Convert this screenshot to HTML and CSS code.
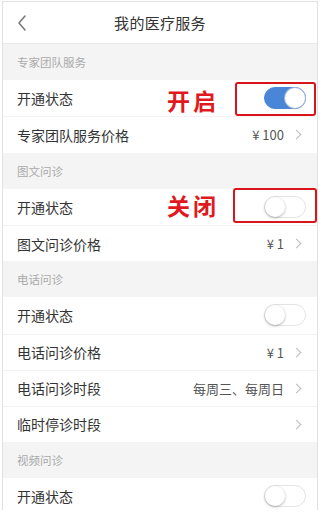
FILE: index.html
```html
<!DOCTYPE html>
<html lang="zh-CN">
<head>
<meta charset="utf-8">
<link rel="stylesheet" href="styles.css">
</head>
<body>
<div class="frame">
  <div class="navbar">
    <svg class="back" width="12" height="18" viewBox="0 0 12 18"><path d="M9 2 L3 9 L9 16" fill="none" stroke="#777" stroke-width="1.5" stroke-linecap="round" stroke-linejoin="round"/></svg>
    <div class="title">我的医疗服务</div>
  </div>

  <div class="section">专家团队服务</div>
  <div class="row">
    <span class="label">开通状态</span>
    <span class="switch on"><span class="knob"></span></span>
    <span class="note note1">开启</span>
    <span class="mark mark1"></span>
  </div>
  <div class="row">
    <span class="label">专家团队服务价格</span>
    <span class="value">¥ 100</span>
    <span class="chev"></span>
  </div>

  <div class="section">图文问诊</div>
  <div class="row">
    <span class="label">开通状态</span>
    <span class="switch"><span class="knob"></span></span>
    <span class="note note2">关闭</span>
    <span class="mark mark2"></span>
  </div>
  <div class="row">
    <span class="label">图文问诊价格</span>
    <span class="value">¥ 1</span>
    <span class="chev"></span>
  </div>

  <div class="section">电话问诊</div>
  <div class="row">
    <span class="label">开通状态</span>
    <span class="switch"><span class="knob"></span></span>
  </div>
  <div class="row">
    <span class="label">电话问诊价格</span>
    <span class="value">¥ 1</span>
    <span class="chev"></span>
  </div>
  <div class="row">
    <span class="label">电话问诊时段</span>
    <span class="value">每周三、每周日</span>
    <span class="chev"></span>
  </div>
  <div class="row">
    <span class="label">临时停诊时段</span>
    <span class="value"></span>
    <span class="chev"></span>
  </div>

  <div class="section">视频问诊</div>
  <div class="row">
    <span class="label">开通状态</span>
    <span class="switch"><span class="knob"></span></span>
  </div>
</div>
</body>
</html>
```

FILE: styles.css
```css
* { box-sizing: border-box; }
html, body { margin: 0; padding: 0; background: #fff; }
body {
  font-family: "Noto Sans CJK SC", "Noto Sans", sans-serif;
  color: #333;
}
.frame {
  margin: 1px 2px 0 2px;
  width: 316px;
  height: 509px;
  border: 1px solid #e2e2e2;
  border-bottom: none;
  overflow: hidden;
  background: #f4f4f4;
}
.navbar {
  height: 42px;
  background: #fff;
  border-bottom: 1px solid #e8e8e8;
  display: flex;
  align-items: center;
  justify-content: center;
  position: relative;
}
.back { position: absolute; left: 13px; top: 12px; }
.title { font-size: 15px; color: #333; letter-spacing: 0.3px; }
.section {
  height: 36.2px;
  display: flex;
  align-items: center;
  padding-left: 14px;
  font-size: 11.5px;
  color: #aaa;
  background: #f4f4f4;
}
.row {
  height: 36.2px;
  display: flex;
  align-items: center;
  padding: 0 14px 0 14px;
  background: #fff;
  position: relative;
  border-top: 1px solid #f3f3f3;
}
.section + .row { border-top: none; }
.label { font-size: 14px; color: #333; flex: 1; }
.value { font-size: 13px; color: #555; margin-right: 9px; white-space: pre; }
.chev {
  width: 7px; height: 7px;
  border-top: 1.2px solid #bbb;
  border-right: 1.2px solid #bbb;
  transform: rotate(45deg);
  margin-right: 3px;
}
.switch {
  width: 42px; height: 22px;
  border-radius: 11px;
  border: 1px solid #e4e4e4;
  background: #fff;
  position: relative;
  margin-right: -3px;
}
.switch .knob {
  position: absolute;
  left: 0; top: 0;
  width: 20px; height: 20px;
  border-radius: 50%;
  background: #fff;
  box-shadow: 0 1px 3px rgba(0,0,0,0.3);
}
.switch.on { background: #4a86d8; border-color: #4a86d8; }
.switch.on .knob { left: 20px; box-shadow: 0 0 0 1px #9db6d6, 0 1px 2px rgba(0,0,0,0.2); }
.note {
  position: absolute;
  left: 164px;
  font-size: 23px;
  line-height: 1;
  font-weight: 700;
  color: #e0191e;
  letter-spacing: 3px;
}
.note1 { top: 9px; }
.note2 { top: 5px; }
.mark {
  position: absolute;
  border: 2px solid #d9141b;
  border-radius: 3px;
}
.mark1 { left: 232px; top: 2px; width: 81px; height: 34px; }
.mark2 { left: 230px; top: -1px; width: 84px; height: 35px; }
```
